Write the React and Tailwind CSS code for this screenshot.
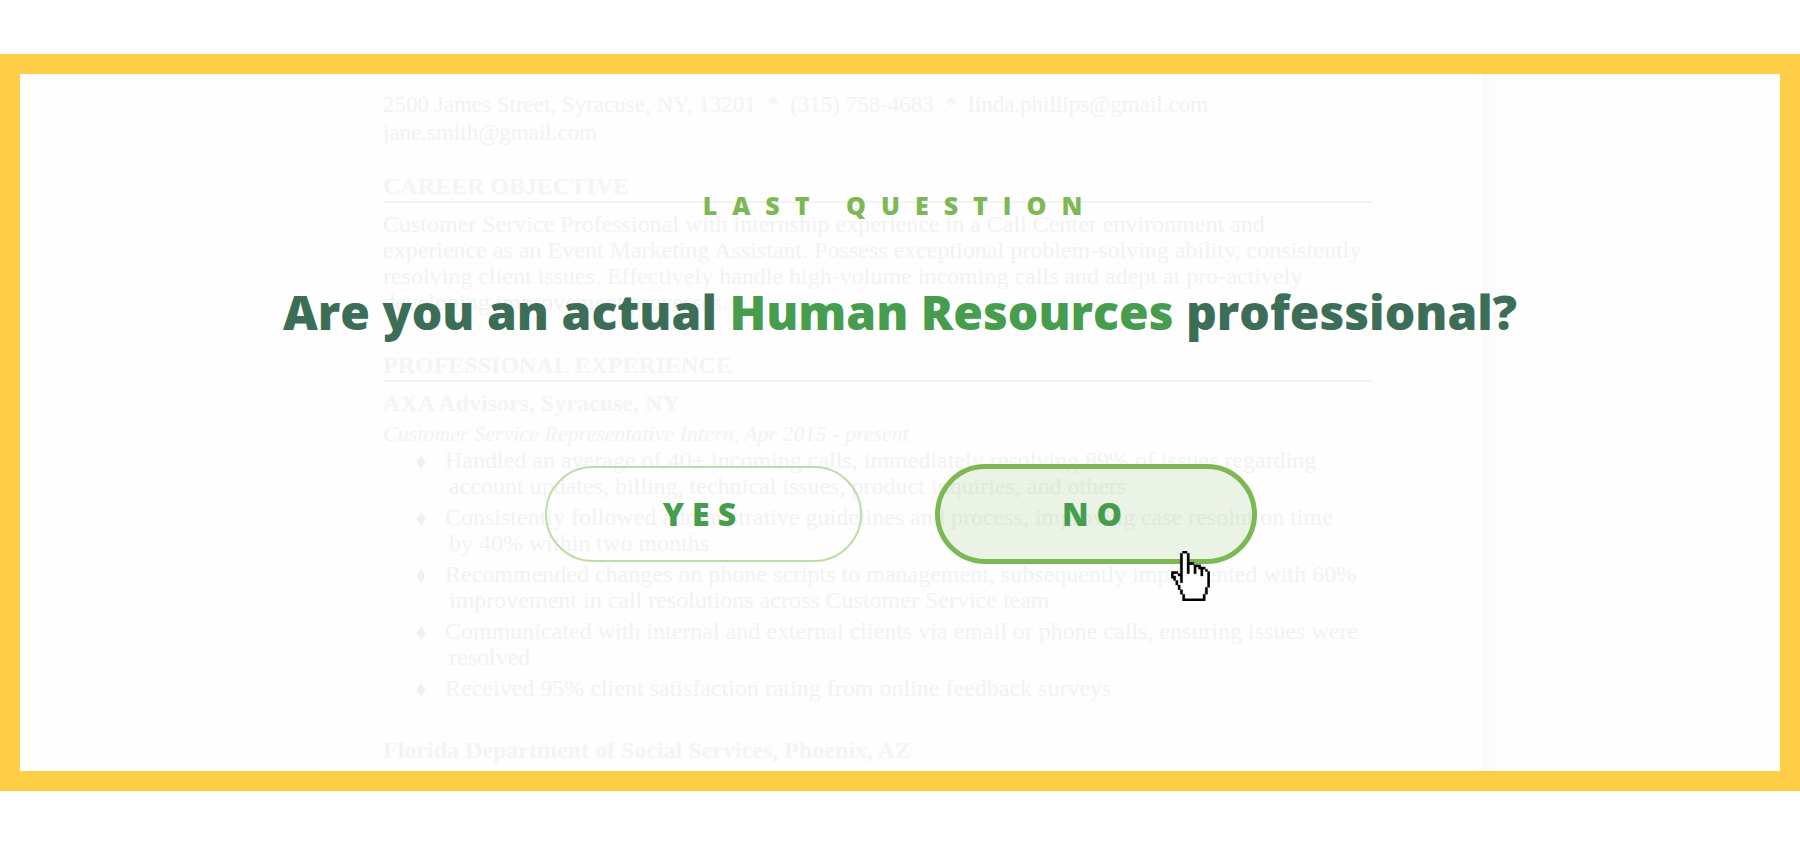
import React from "react";

const objective = [
  "Customer Service Professional with internship experience in a Call Center environment and",
  "experience as an Event Marketing Assistant. Possess exceptional problem-solving ability, consistently",
  "resolving client issues. Effectively handle high-volume incoming calls and adept at pro-actively",
  "developing improvement processes.",
];

const duties = [
  [
    "Handled an average of 40+ incoming calls, immediately resolving 89% of issues regarding",
    "account updates, billing, technical issues, product inquiries, and others",
  ],
  [
    "Consistently followed administrative guidelines and process, improving case resolution time",
    "by 40% within two months",
  ],
  [
    "Recommended changes on phone scripts to management, subsequently implemented with 60%",
    "improvement in call resolutions across Customer Service team",
  ],
  [
    "Communicated with internal and external clients via email or phone calls, ensuring issues were",
    "resolved",
  ],
  ["Received 95% client satisfaction rating from online feedback surveys"],
];

// Pixel map of the pointing hand: "#" is outline, "." is fill.
const HAND = [
  "     ##          ",
  "    #..#         ",
  "    #..#         ",
  "    #..#         ",
  "    #..#         ",
  "    #..###       ",
  "    #..#..###    ",
  "    #..#..#.###  ",
  "    #..#..#..#.# ",
  "### #..#..#..#..#",
  "#..##........#..#",
  "##..#...........#",
  " #..#...........#",
  "  #.#...........#",
  "  #.............#",
  "   #............#",
  "   #...........# ",
  "    #..........# ",
  "    #..........# ",
  "     #........#  ",
  "     #........#  ",
  "     ##########  ",
];

const cells = (mark) =>
  HAND.flatMap((row, y) =>
    [...row].map((c, x) => (mark.includes(c) ? `M${x} ${y}h1v1h-1z` : ""))
  ).join("");

function HandPointer({ className }) {
  return (
    <svg viewBox="0 0 17 22" className={className} aria-hidden="true">
      <path d={cells("#.")} fill="#fff" />
      <path d={cells("#")} fill="#000" stroke="#000" strokeWidth="0.15" />
    </svg>
  );
}

function Lines({ items }) {
  return items.map((line) => (
    <span key={line} className="block whitespace-nowrap">
      {line}
    </span>
  ));
}

function SectionTitle({ children }) {
  return (
    <h2 className="border-b-2 border-[#f2f2f3] pb-0.5 font-bold text-[#f3f4f6]">
      {children}
    </h2>
  );
}

function Resume() {
  return (
    <div className="flex justify-center overflow-hidden bg-[#fdfdfd] [grid-area:1/1]">
      <article className="w-full max-w-[1164px] bg-[#fefefe] pt-[17px] pr-[110px] pb-2 pl-[65px] font-['Liberation_Serif',serif] text-[24px] leading-[26px] text-[#f2f2f3] shadow-[-2px_0_0_#fcfcfc,6px_0_0_#fafafa,14px_0_0_#fcfcfc]">
        <p className="text-[23px] leading-7 whitespace-pre">
          {"2500 James Street, Syracuse, NY, 13201  *  (315) 758-4683  *  linda.phillips@gmail.com\njane.smith@gmail.com"}
        </p>
        <div className="mt-[26px]">
          <SectionTitle>CAREER OBJECTIVE</SectionTitle>
        </div>
        <p className="mt-2">
          <Lines items={objective} />
        </p>
        <div className="mt-[37px]">
          <SectionTitle>PROFESSIONAL EXPERIENCE</SectionTitle>
        </div>
        <h3 className="mt-2 font-bold text-[#f3f4f6]">AXA Advisors, Syracuse, NY</h3>
        <p className="mt-[5px] text-[22px] italic">Customer Service Representative Intern, Apr 2015 - present</p>
        <ul className="flex flex-col gap-[5px] pl-[33px]">
          {duties.map(([first, ...rest]) => (
            <li key={first} className="flex">
              <svg viewBox="0 0 10 16" className="mt-[7px] mr-[19px] h-4 w-[10px] shrink-0" aria-hidden="true">
                <path d="M5 1L9.500 8L5 15L0.500 8z" fill="#f0f0f1" />
              </svg>
              <div>
                <Lines items={[first]} />
                <div className="pl-1">
                  <Lines items={rest} />
                </div>
              </div>
            </li>
          ))}
        </ul>
        <h3 className="mt-9 font-bold text-[#f3f4f6]">
          Florida Department of Social Services, Phoenix, AZ
        </h3>
      </article>
    </div>
  );
}

function Question() {
  return (
    <div className="flex flex-col items-center pt-[115px] font-['Open_Sans',sans-serif] font-extrabold [grid-area:1/1]">
      <p className="text-[25px] leading-8 tracking-[15px] text-[#7cb854]">LAST QUESTION</p>
      <h1 className="mt-[59px] text-5xl leading-[64px] text-[#3c6e57]">
        Are you an actual <span className="text-[#469d4d]">Human Resources</span> professional?
      </h1>
      <div className="mt-[120px] flex items-center gap-[73px] pl-0.5 text-[32px] leading-10 tracking-[8px] text-[#469d4d]">
        <button
          type="button"
          className="h-24 w-[317px] rounded-full border-2 border-[#bddca7]"
        >
          YES
        </button>
        <button
          type="button"
          className="relative h-[100px] w-[322px] rounded-full border-5 border-[#7cb854] bg-[#7cb854]/15"
        >
          NO
          <HandPointer className="absolute top-[82px] left-[231px] h-[50px] w-[39px]" />
        </button>
      </div>
    </div>
  );
}

export default function App() {
  return (
    <main className="bg-white pt-[54px] pb-[55px]">
      <section className="grid border-20 border-[#ffce47]">
        <Resume />
        <Question />
      </section>
    </main>
  );
}
